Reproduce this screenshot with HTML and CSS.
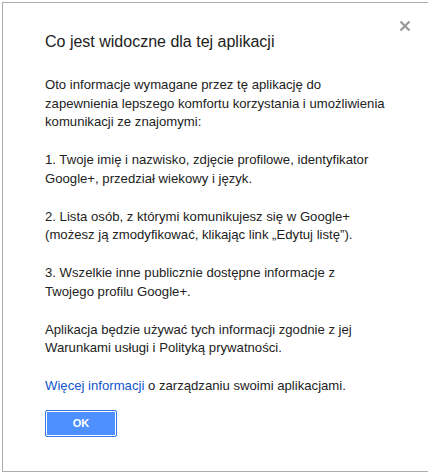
FILE: index.html
```html
<!DOCTYPE html>
<html lang="pl">
<head>
  <meta charset="UTF-8">
  <title>Co jest widoczne dla tej aplikacji</title>
  <link rel="stylesheet" href="styles.css">
</head>
<body>
  <div class="modal-dialog">
    <span class="modal-close" title="Zamknij">
      <svg width="12" height="12" viewBox="0 0 12 12">
        <path d="M1.5 1.5 L10.5 10.5 M10.5 1.5 L1.5 10.5" stroke="#999" stroke-width="2.2" fill="none"/>
      </svg>
    </span>
    <div class="modal-title">Co jest widoczne dla tej aplikacji</div>
    <div class="modal-content">
      <p>Oto informacje wymagane przez tę aplikację do zapewnienia lepszego komfortu korzystania i umożliwienia komunikacji ze znajomymi:</p>
      <p>1. Twoje imię i nazwisko, zdjęcie profilowe, identyfikator Google+, przedział wiekowy i język.</p>
      <p>2. Lista osób, z którymi komunikujesz się w Google+ (możesz ją zmodyfikować, klikając link „Edytuj listę”).</p>
      <p>3. Wszelkie inne publicznie dostępne informacje z<br>Twojego profilu Google+.</p>
      <p>Aplikacja będzie używać tych informacji zgodnie z jej Warunkami usługi i Polityką prywatności.</p>
      <p><a href="#">Więcej informacji</a> o zarządzaniu swoimi aplikacjami.</p>
    </div>
    <div class="modal-buttons">
      <button class="button-action">OK</button>
    </div>
  </div>
</body>
</html>
```

FILE: styles.css
```css
body {
  margin: 2px;
  background-color: #ffffff;
  font-family: Arial, "Liberation Sans", sans-serif;
  color: #222;
}
.modal-dialog {
  position: relative;
  width: 342px;
  height: 408px;
  padding: 30px 42px;
  background-color: #ffffff;
  border: 1px solid #acacac;
  box-shadow: 0 1px 2px rgba(0, 0, 0, 0.2);
}
.modal-close {
  position: absolute;
  top: 17px;
  right: 18px;
  width: 12px;
  height: 12px;
  cursor: pointer;
}
.modal-close svg {
  display: block;
}
.modal-title {
  font-size: 16px;
  line-height: 24px;
  margin-top: -3px;
  margin-bottom: 22px;
}
.modal-content {
  font-size: 13.15px;
  line-height: 18.5px;
}
.modal-content p {
  margin: 0 0 19.5px 0;
}
.modal-content p:last-child {
  margin-bottom: 14px;
}
.modal-content a {
  color: #15c;
  text-decoration: none;
}
.button-action {
  min-width: 72px;
  height: 27px;
  padding: 0 8px;
  font-family: Arial, "Liberation Sans", sans-serif;
  font-size: 11px;
  font-weight: bold;
  color: #ffffff;
  background-color: #4d90fe;
  border: 1px solid #3079ed;
  border-radius: 2px;
  box-shadow: inset 0 0 0 1px #ffffff;
  cursor: pointer;
}
```
